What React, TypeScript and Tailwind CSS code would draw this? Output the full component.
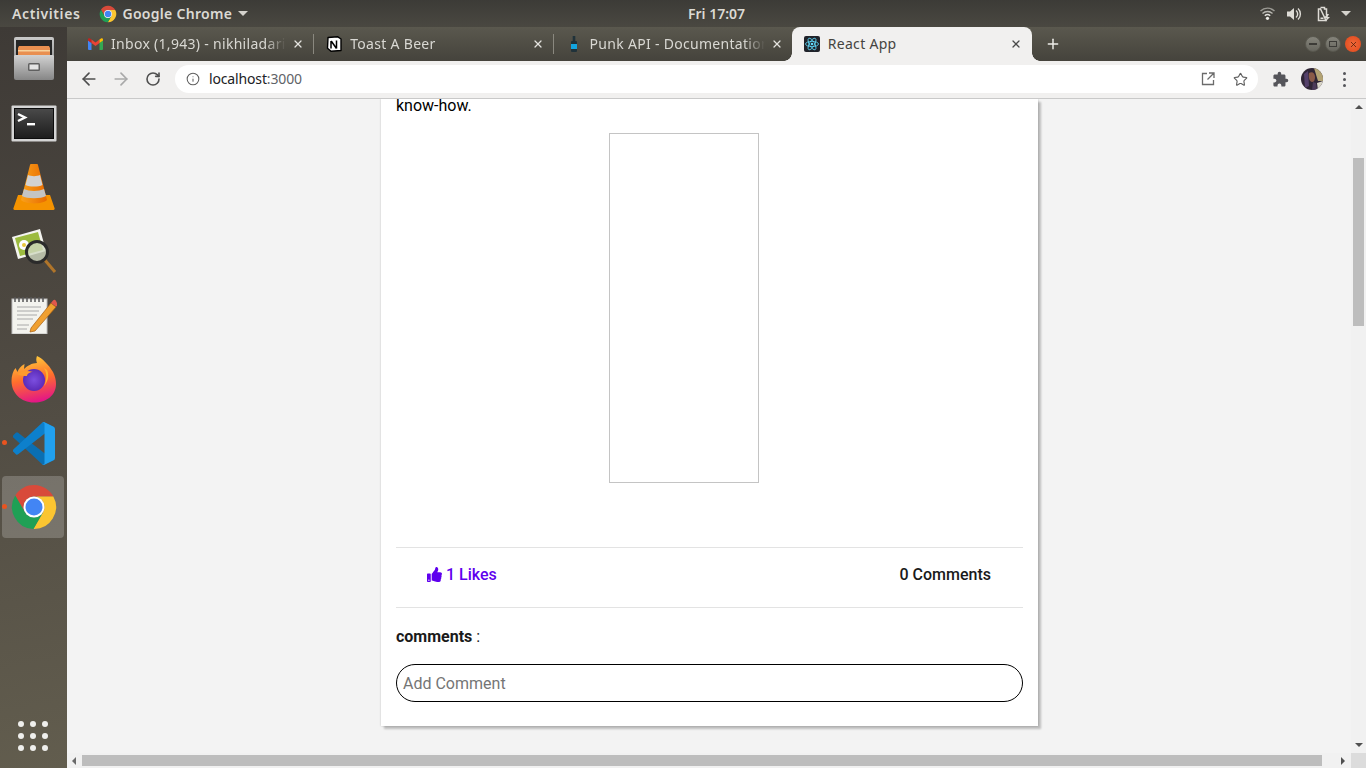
import { ArrowLeft, ArrowRight, Info, Plus, RotateCw, Star, X } from "lucide-react"
import { FaThumbsUp } from "react-icons/fa"
import { MdExtension } from "react-icons/md"

const UI_FONT = "font-['Noto_Sans','Open_Sans',sans-serif]"

function ChromeLogo({ size }: { size: number }) {
  return (
    <svg width={size} height={size} viewBox="0 0 48 48">
      <path d="M24 13.500H43.330A22 22 0 0 0 5.240 12.510L14.910 29.250A10.500 10.500 0 0 1 24 13.500z" fill="#d84a3a" />
      <path d="M43.330 13.500A22 22 0 0 1 23.430 46L33.090 29.250A10.500 10.500 0 0 0 24 13.500z" fill="#fbc531" />
      <path d="M5.240 12.510A22 22 0 0 0 23.430 46L33.090 29.250A10.500 10.500 0 0 1 14.910 29.250z" fill="#1fa055" />
      <circle cx="24" cy="24" r="10.500" fill="#fff" />
      <circle cx="24" cy="24" r="8.500" fill="#4285f4" />
    </svg>
  )
}

function GmailIcon() {
  return (
    <svg width="15" height="12" viewBox="0 0 15 12">
      <path d="M0 2v9a1 1 0 0 0 1 1h2.500V5z" fill="#4285f4" />
      <path d="M15 2v9a1 1 0 0 1-1 1h-2.500V5z" fill="#34a853" />
      <path d="M0 2.500 3.500 5V1.500L2 .4C1.200-.2 0 .4 0 1.500z" fill="#c5221f" />
      <path d="M3.500 5 7.500 8l4-3V1.500L7.500 4.500l-4-3z" fill="#ea4335" />
      <path d="M15 2.500 11.500 5V1.500L13 .4c.8-.6 2 0 2 1.100z" fill="#fbbc04" />
    </svg>
  )
}

function NotionIcon() {
  return (
    <svg width="16" height="16" viewBox="0 0 16 16">
      <path d="M2 1.500 11.500.7 15 3v11.500l-10 .8-3.500-3z" fill="#fff" stroke="#000" strokeWidth="1.400" strokeLinejoin="round" />
      <path d="M5 5v7.500M5.200 5l5.300 7.500M10.500 4.500v8" stroke="#000" strokeWidth="1.500" fill="none" />
    </svg>
  )
}

function BottleIcon() {
  return (
    <svg width="8" height="16" viewBox="0 0 8 16">
      <rect x="2.700" y="0" width="2.600" height="5" fill="#20323a" />
      <rect x="1" y="5" width="6" height="11" rx="1" fill="#20323a" />
      <rect x="1" y="8" width="6" height="5" fill="#12a5e0" />
    </svg>
  )
}

function ReactIcon() {
  return (
    <svg width="16" height="16" viewBox="0 0 16 16">
      <rect width="16" height="16" rx="2" fill="#20232a" />
      <g fill="none" stroke="#61dafb" strokeWidth=".8">
        <ellipse cx="8" cy="8" rx="6.500" ry="2.600" />
        <ellipse cx="8" cy="8" rx="6.500" ry="2.600" transform="rotate(60 8 8)" />
        <ellipse cx="8" cy="8" rx="6.500" ry="2.600" transform="rotate(120 8 8)" />
      </g>
      <circle cx="8" cy="8" r="1.300" fill="#61dafb" />
    </svg>
  )
}

function FilesIcon() {
  return (
    <svg width="42" height="44" viewBox="0 0 42 44">
      <defs>
        <linearGradient id="drawer" x1="0" y1="0" x2="0" y2="1">
          <stop offset="0" stopColor="#d2d2d2" />
          <stop offset="1" stopColor="#868686" />
        </linearGradient>
        <linearGradient id="cabinet" x1="0" y1="0" x2="0" y2="1">
          <stop offset="0" stopColor="#c9c9c9" />
          <stop offset="1" stopColor="#777" />
        </linearGradient>
      </defs>
      <rect x="1" y="0" width="40" height="40" rx="2" fill="url(#cabinet)" />
      <rect x="3" y="3" width="36" height="16" fill="#262626" />
      <path d="M5 11 6 9h30l1 2v8H5z" fill="#e98f50" />
      <rect x="5" y="13" width="32" height="1.500" fill="#f8d29b" />
      <path d="M2 18h38l1 1v22a2 2 0 0 1-2 2H3a2 2 0 0 1-2-2V19z" fill="url(#drawer)" />
      <rect x="15" y="26" width="12" height="8" rx="1.500" fill="#606060" />
      <rect x="16.500" y="27.500" width="9" height="5" fill="#e4e4e4" />
    </svg>
  )
}

function TerminalIcon() {
  return (
    <svg width="46" height="37" viewBox="0 0 46 37">
      <defs>
        <linearGradient id="term" x1="0" y1="0" x2="0" y2="1">
          <stop offset="0" stopColor="#4a4a4a" />
          <stop offset="1" stopColor="#1c1c1c" />
        </linearGradient>
      </defs>
      <rect x=".5" y=".5" width="45" height="36" rx="1" fill="#d4d4d4" />
      <rect x="3.500" y="3.500" width="39" height="30" fill="url(#term)" stroke="#0c0c0c" />
      <path d="M7 9l7 3.500L7 16" fill="none" stroke="#fff" strokeWidth="2.400" />
      <rect x="16" y="18" width="8" height="2.400" fill="#fff" />
    </svg>
  )
}

function VlcIcon() {
  return (
    <svg width="42" height="46" viewBox="0 0 42 46">
      <defs>
        <linearGradient id="cone" x1="0" y1="0" x2="1" y2="0">
          <stop offset="0" stopColor="#f9a11b" />
          <stop offset="1" stopColor="#e86a00" />
        </linearGradient>
      </defs>
      <path d="M5 31h32l4.500 13a1.500 1.500 0 0 1-1 2H1.500a1.500 1.500 0 0 1-1-2z" fill="#f59300" />
      <path d="M17 1a4 1.500 0 0 1 8 0l9 35c-4 4.500-22 4.500-26 0z" fill="url(#cone)" />
      <path d="M15 11c3 1.500 9 1.500 12 0l2.500 10c-4 2-13 2-17 0z" fill="#d2d2d2" />
      <path d="M11 25c5 2.500 15 2.500 20 0l2 7c-5 3-19 3-24 0z" fill="#c4c4c4" />
    </svg>
  )
}

function ViewerIcon() {
  return (
    <svg width="46" height="46" viewBox="0 0 46 46">
      <path d="M1 9 29 1l6 22-28 8z" fill="#f4f4f0" />
      <path d="M4 10 27 4l5 18-23 6z" fill="#9cbb3f" />
      <circle cx="13" cy="17" r="5" fill="#fff" />
      <circle cx="13" cy="17" r="2" fill="#e8c63c" />
      <path d="M33 31l11 13" stroke="#b0752a" strokeWidth="3" />
      <circle cx="26" cy="24" r="10.500" fill="#cfd8c0" fillOpacity=".8" stroke="#2b2b2b" strokeWidth="3" />
    </svg>
  )
}

function EditorIcon() {
  return (
    <svg width="46" height="38" viewBox="0 0 46 38">
      <rect x="1" y="3" width="35" height="35" fill="#f3f3ee" stroke="#bdbdbd" />
      <path d="M4 1v5M8 1v5M12 1v5M16 1v5M20 1v5M24 1v5M28 1v5M32 1v5" stroke="#555" strokeWidth="1.500" />
      <path d="M6 11h24M6 15h22M6 19h20M6 23h16M6 29h12M6 33h10" stroke="#a8a8a8" />
      <path d="M20 32 40 7l5 4-21 24-5 1z" fill="#f0a030" stroke="#a85f10" strokeWidth=".7" />
      <path d="M40 7l2-2.500a2 2 0 0 1 3 .5l1 2a2 2 0 0 1-1 3.500z" fill="#e2574c" />
    </svg>
  )
}

function FirefoxIcon() {
  return (
    <svg width="46" height="47" viewBox="0 0 46 47">
      <defs>
        <linearGradient id="fox" x1="0.300" y1="0" x2="0.500" y2="1">
          <stop offset="0" stopColor="#ffd23c" />
          <stop offset=".5" stopColor="#ff6f2c" />
          <stop offset="1" stopColor="#e31587" />
        </linearGradient>
        <radialGradient id="globe">
          <stop offset="0" stopColor="#7c4fe0" />
          <stop offset="1" stopColor="#5b2bb8" />
        </radialGradient>
      </defs>
      <path d="M23 46.500C10 46.500 .5 37 .5 25c0-5 1.500-10 4-13l2 4c1-3 3-6 7-8l-.5 5c3-3 8-6 13-6-1-2-1-5 0-7 5 2 12 9 16 16 2 4 3 8 3 12 0 11-9 18.500-22 18.500z" fill="url(#fox)" />
      <circle cx="23" cy="24" r="11" fill="url(#globe)" />
      <path d="M6 18c4-3 10-4 16-2-3 0-6 2-6 4-3 0-6 0-10-2z" fill="#ff9a2e" />
      <path d="M33 12c3 5 3 12 0 18 3-3 6-10 3-16z" fill="#ffb12e" />
    </svg>
  )
}

function VsCodeIcon() {
  return (
    <svg width="42" height="43" viewBox="0 0 100 100" preserveAspectRatio="none">
      <path d="M96.500 89.200 75.900 99.100a6.200 6.200 0 0 1-7.100-1.200L1.400 36.400a4.200 4.200 0 0 1 0-6.200l5.500-5a4.200 4.200 0 0 1 5.300-.2L93.400 86.500c2.700 2.100 6.600.2 6.600-3.300v.2a6.200 6.200 0 0 1-3.500 5.800z" fill="#0a6fb3" />
      <path d="M96.500 10.800 75.900.9a6.200 6.200 0 0 0-7.100 1.200L1.400 63.600a4.200 4.200 0 0 0 0 6.200l5.500 5a4.200 4.200 0 0 0 5.300.2L93.400 13.500c2.700-2.100 6.600-.2 6.600 3.300v-.2a6.200 6.200 0 0 0-3.500-5.800z" fill="#0d80cc" />
      <path d="M75.900 99.100a6.200 6.200 0 0 1-7.100-1.200c2.300 2.300 6.200.7 6.200-2.600V4.700c0-3.300-3.900-4.900-6.200-2.600a6.200 6.200 0 0 1 7.100-1.200l20.600 9.900a6.200 6.200 0 0 1 3.500 5.600v67.200a6.200 6.200 0 0 1-3.500 5.600z" fill="#21a0ee" />
    </svg>
  )
}

function Avatar() {
  return (
    <svg width="22" height="22" viewBox="0 0 22 22">
      <defs>
        <clipPath id="avatar"><circle cx="11" cy="11" r="11" /></clipPath>
      </defs>
      <g clipPath="url(#avatar)">
        <rect width="22" height="22" fill="#2f2535" />
        <path d="M13 0h9v13h-5z" fill="#b3a374" />
        <path d="M16 15l6-2v9h-5z" fill="#d9d6c8" />
        <path d="M8 5c3-2 6 0 6 4 0 3-1 5-3 5s-4-4-3-9z" fill="#8a5a48" />
        <path d="M3 6l4-3 1 15-4 2z" fill="#54406a" />
        <path d="M12 14l3 1 1 7h-5z" fill="#4b3a58" />
      </g>
    </svg>
  )
}

function DockItem({ children, running, active }: { children: React.ReactNode; running?: boolean; active?: boolean }) {
  return (
    <div className="relative h-[64px] w-full flex items-center justify-center">
      {active && <div className="absolute left-[2px] top-[1px] w-[62px] h-[62px] rounded-[4px] bg-white/20" />}
      {running && <div className="absolute left-[2px] top-[29px] size-[5px] rounded-full bg-[#e95420]" />}
      <div className="relative flex items-center justify-center">{children}</div>
    </div>
  )
}

function Tab({ icon, title, active, showDivider }: { icon: React.ReactNode; title: string; active?: boolean; showDivider?: boolean }) {
  if (active) {
    return (
      <div className="relative w-[240.500px] h-full flex items-center bg-[#f1f0ef] rounded-t-[8px] pl-[12px] pr-[10px] text-[#45443f]">
        <div className="absolute -left-[8px] bottom-0 size-[8px] bg-[radial-gradient(circle_at_0_0,transparent_7.500px,#f1f0ef_8px)]" />
        <div className="absolute -right-[8px] bottom-0 size-[8px] bg-[radial-gradient(circle_at_100%_0,transparent_7.500px,#f1f0ef_8px)]" />
        <div className="w-[16px] flex justify-center shrink-0">{icon}</div>
        <span className="ml-[8px] -mt-[2px] flex-1 text-[14px] tracking-[0.3px] whitespace-nowrap overflow-hidden">{title}</span>
        <X size={12} strokeWidth={2.500} className="text-[#4a4a4a]" />
      </div>
    )
  }
  return (
    <div className="relative w-[239.250px] h-full flex items-center pl-[13px] pr-[9px] text-[#d9d8d3]">
      <div className="w-[16px] flex justify-center shrink-0">{icon}</div>
      <span className="ml-[8px] -mt-[2px] flex-1 min-w-0 text-[14px] tracking-[0.3px] whitespace-nowrap overflow-hidden [mask-image:linear-gradient(to_right,black_88%,transparent)]">{title}</span>
      <X size={12} strokeWidth={2.500} className="ml-[6px] shrink-0 text-[#e4e3df]" />
      {showDivider && <div className="absolute -right-[1px] top-[7px] h-[20px] w-px bg-[#8a887f]" />}
    </div>
  )
}

function WindowButton({ close, children }: { close?: boolean; children: React.ReactNode }) {
  return (
    <div className={close ? "size-[16px] rounded-full flex items-center justify-center bg-[radial-gradient(circle,#f0693a,#e0471a)]" : "size-[16px] rounded-full flex items-center justify-center bg-[linear-gradient(#85847b,#67665e)] border border-[#5a5950]"}>
      {children}
    </div>
  )
}

export default function App() {
  return (
    <div className={`w-[1366px] h-[768px] overflow-hidden flex flex-col bg-[#f3f3f3] ${UI_FONT}`}>
      {/* Ubuntu top bar */}
      <div className="h-[27px] shrink-0 relative flex items-center bg-[linear-gradient(#3c3b37,#4a4841)] text-[#dcdad4] text-[14px] font-semibold">
        <span className="ml-[12px] tracking-[0.6px]">Activities</span>
        <div className="ml-[19px] flex items-center">
          <ChromeLogo size={18} />
          <span className="ml-[5px] tracking-[0.3px]">Google Chrome</span>
          <svg width="10" height="5" viewBox="0 0 10 5" className="ml-[6px]"><path d="M0 0h10L5 5z" fill="#d5d3cd" /></svg>
        </div>
        <span className="absolute left-[688px] top-[3px]">Fri 17:07</span>
        <div className="ml-auto mr-[15px] flex items-center">
          <svg width="15" height="13" viewBox="0 0 15 13">
            <path d="M.5 4a10 10 0 0 1 14 0" fill="none" stroke="#9b9a94" strokeWidth="1.400" />
            <path d="M2.500 6.500a7.200 7.200 0 0 1 10 0" fill="none" stroke="#b9b8b2" strokeWidth="1.400" />
            <path d="M4.800 8.800a4 4 0 0 1 5.400 0" fill="none" stroke="#e2e1dc" strokeWidth="1.400" />
            <circle cx="7.500" cy="11.300" r="1.600" fill="#eeede8" />
          </svg>
          <svg width="15" height="14" viewBox="0 0 15 14" className="ml-[12px]">
            <path d="M0 4.500h3L7 1v12L3 9.500H0z" fill="#dedcd6" />
            <path d="M9 3.500a4.500 4.500 0 0 1 0 7M11 1.500a7.500 7.500 0 0 1 0 11" fill="none" stroke="#dedcd6" strokeWidth="1.400" />
          </svg>
          <svg width="14" height="16" viewBox="0 0 14 16" className="ml-[15px]">
            <path d="M3.500 1.500h4v1.500H9.500v6M9 14.500H1.500V3h2z" fill="none" stroke="#dedcd6" strokeWidth="1.500" />
            <path d="M10 8l-3 4h2.500L8.500 15.500 13 11h-2.500L12 8z" fill="#dedcd6" />
            <rect x="3.500" y="11.500" width="3" height="1.500" fill="#dedcd6" />
          </svg>
          <svg width="10" height="5" viewBox="0 0 10 5" className="ml-[10px]"><path d="M0 0h10L5 5z" fill="#d5d3cd" /></svg>
        </div>
      </div>

      <div className="flex-1 min-h-0 flex">
        {/* Dock */}
        <div className="w-[67px] shrink-0 flex flex-col bg-[linear-gradient(170deg,#3e3a36,#4f4a42_45%,#625d4e)]">
          <DockItem><FilesIcon /></DockItem>
          <DockItem><TerminalIcon /></DockItem>
          <DockItem><VlcIcon /></DockItem>
          <DockItem><ViewerIcon /></DockItem>
          <DockItem><EditorIcon /></DockItem>
          <DockItem><FirefoxIcon /></DockItem>
          <DockItem running><VsCodeIcon /></DockItem>
          <DockItem running active><ChromeLogo size={48} /></DockItem>
          <div className="mt-auto mb-[17px] ml-[18px] w-[30px] grid grid-cols-3 gap-[6px]">
            {Array.from({ length: 9 }).map((_, i) => (
              <div key={i} className="size-[6px] rounded-full bg-[#efefec]" />
            ))}
          </div>
        </div>

        {/* Chrome window */}
        <div className="flex-1 min-w-0 flex flex-col">
          <div className="h-[34px] shrink-0 flex items-center bg-[linear-gradient(#5a584e,#45433c)] pl-[7px]">
            <Tab icon={<GmailIcon />} title="Inbox (1,943) - nikhiladaris" showDivider />
            <Tab icon={<NotionIcon />} title="Toast A Beer" showDivider />
            <Tab icon={<BottleIcon />} title="Punk API - Documentation" />
            <Tab icon={<ReactIcon />} title="React App" active />
            <Plus size={16} strokeWidth={2.200} className="ml-[13px] text-[#eeede9]" />
            <div className="ml-auto mr-[5px] flex items-center gap-[4px]">
              <WindowButton><div className="w-[8px] h-[1.500px] bg-[#3c3b37]" /></WindowButton>
              <WindowButton><div className="w-[8px] h-[6px] border border-[#3c3b37]" /></WindowButton>
              <WindowButton close><X size={9} strokeWidth={2} className="text-[#4a1c08]" /></WindowButton>
            </div>
          </div>

          <div className="h-[38px] shrink-0 flex items-center bg-[#f1f0ef] border-b border-[#c9c9c9] pb-px text-[#5a5a5a]">
            <ArrowLeft size={20} strokeWidth={2} className="ml-[12px] text-[#4f4f4f]" />
            <ArrowRight size={20} strokeWidth={2} className="ml-[12px] text-[#a9a9a9]" />
            <RotateCw size={16} strokeWidth={2.400} className="ml-[14px] text-[#4f4f4f]" />
            <div className="ml-[14px] w-[1083px] h-[28px] rounded-full bg-white flex items-center pl-[11px] pr-[10px]">
              <Info size={14} strokeWidth={1.800} className="text-[#5f5f5f]" />
              <span className="ml-[9px] -mt-[2px] text-[14px] tracking-[-0.15px] text-[#202124]">localhost<span className="text-[#5f6368]">:3000</span></span>
              <svg width="14" height="14" viewBox="0 0 14 14" className="ml-auto">
                <path d="M6 1.500H1.500v11h11V8M8 1h5v5M13 1 6.500 7.500" fill="none" stroke="#6b6b6b" strokeWidth="1.300" />
              </svg>
              <Star size={15} strokeWidth={1.800} className="ml-[18px] text-[#5f5f5f]" />
            </div>
            <MdExtension size={17} className="ml-[14px] text-[#55555a]" />
            <div className="ml-[12px] size-[22px] shrink-0"><Avatar /></div>
            <div className="ml-[20px] flex flex-col gap-[3px]">
              <div className="size-[3px] rounded-full bg-[#55555a]" />
              <div className="size-[3px] rounded-full bg-[#55555a]" />
              <div className="size-[3px] rounded-full bg-[#55555a]" />
            </div>
          </div>

          <div className="flex-1 min-h-0 flex flex-col">
            <div className="flex-1 min-h-0 flex">
              {/* Page */}
              <div className="flex-1 min-w-0 overflow-hidden bg-[#f3f3f3] font-['Roboto',sans-serif]">
                <div className="ml-[314px] w-[657px] h-[627px] bg-white shadow-[3px_3px_2px_rgba(0,0,0,0.22),0_0_2px_rgba(0,0,0,0.2)] px-[15px]">
                  <p className="text-[16px] leading-[14px] text-black">know-how.</p>
                  <div className="mt-[20px] ml-[213px] w-[150px] h-[350px] border border-[#c4c4c4]" />
                  <div className="mt-[64px] border-t border-[#e3e3e3] h-[60px] flex items-center justify-between pb-[6px] pl-[31px] pr-[32px] font-medium text-[16px]">
                    <div className="flex items-center text-[#5f00ee]">
                      <FaThumbsUp size={15} />
                      <span className="ml-[4px]">1 Likes</span>
                    </div>
                    <span className="text-[#1a1a1a]">0 Comments</span>
                  </div>
                  <div className="border-t border-[#e3e3e3] pt-[19px] text-[16px] leading-[19px] text-[#1a1a1a]">
                    <b className="font-bold">comments</b> :
                  </div>
                  <div className="mt-[18px] h-[38px] rounded-full border border-black flex items-center pl-[6px] pt-[2px] text-[16px] text-[#757575]">Add Comment</div>
                </div>
              </div>
              {/* Vertical scrollbar */}
              <div className="w-[15px] shrink-0 flex flex-col items-center bg-[#f1f1f1]">
                <svg width="8" height="4" viewBox="0 0 8 4" className="mt-[6px]"><path d="M0 4h8L4 0z" fill="#505050" /></svg>
                <div className="mt-[49px] w-[11px] h-[168px] bg-[#bdbdbd]" />
                <svg width="8" height="4" viewBox="0 0 8 4" className="mt-auto mb-[6px]"><path d="M0 0h8L4 4z" fill="#505050" /></svg>
              </div>
            </div>
            {/* Horizontal scrollbar */}
            <div className="h-[15px] shrink-0 flex items-center bg-[#f1f1f1]">
              <svg width="4" height="8" viewBox="0 0 4 8" className="ml-[5px]"><path d="M4 0v8L0 4z" fill="#6a6a6a" /></svg>
              <div className="ml-[6px] w-[1240px] h-[11px] bg-[#bdbdbd]" />
              <svg width="4" height="8" viewBox="0 0 4 8" className="ml-[19px]"><path d="M0 0v8l4-4z" fill="#505050" /></svg>
              <div className="ml-auto w-[15px] h-full bg-[#dcdcdc]" />
            </div>
          </div>
        </div>
      </div>
    </div>
  )
}
